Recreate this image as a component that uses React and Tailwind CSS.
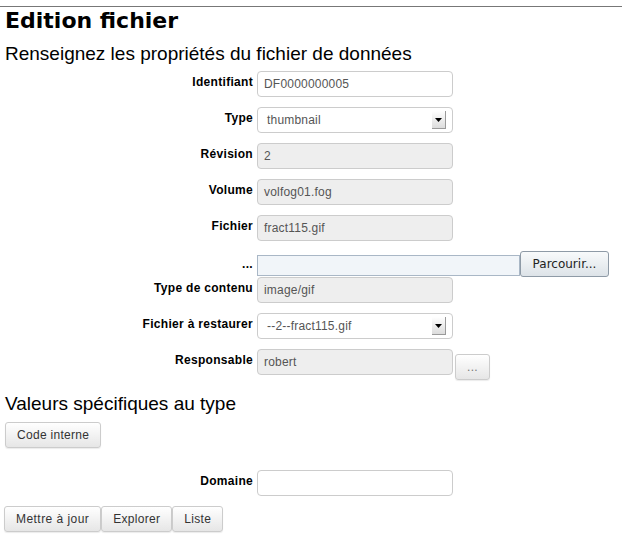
import React from "react";

const Label = ({ children, className = "" }) => (
    <div className={`text-right font-bold text-[12px] leading-[16px] text-black tracking-[0.3px] pr-[2px] ${className}`}>{children}</div>
);

const Field = ({ value, disabled }) => (
    <div
        className={`w-[196px] h-[26px] rounded-[4px] border border-[#cccccc] px-[6px] flex items-center text-[12px] tracking-[0.2px] text-[#555555] ${
            disabled ? "bg-[#eeeeee]" : "bg-white"
        }`}
    >
        {value}
    </div>
);

const Select = ({ value }) => (
    <div className="w-[196px] h-[26px] rounded-[4px] border border-[#cccccc] bg-white pl-[9px] pr-[6px] flex items-center justify-between text-[12px] tracking-[0.2px] text-[#555555]">
        <span>{value}</span>
        <span className="w-[14px] h-[18px] bg-gradient-to-b from-white to-[#dcdcdc] border-r border-b border-[#9a9a9a] flex items-center justify-center">
            <svg width="7" height="4" viewBox="0 0 7 4">
                <path d="M0 0h7L3.5 4z" fill="#000" />
            </svg>
        </span>
    </div>
);

const Btn = ({ children, className = "" }) => (
    <button
        className={`h-[26px] px-[11px] rounded-[3px] border border-[#cccccc] bg-gradient-to-b from-white to-[#e6e6e6] text-[12px] text-[#333333] tracking-[0.3px] shadow-[0_1px_1px_rgba(0,0,0,0.08)] ${className}`}
    >
        {children}
    </button>
);

export default function App() {
    return (
        <div className="w-[628px] h-[559px] bg-white overflow-hidden font-['Liberation_Sans',Arial,sans-serif]">
            <div className="pt-[6px] pr-[6px]">
                <div className="h-[1px] bg-[#777777]" />
            </div>
            <h1 className="px-[5px] font-['DejaVu_Sans',sans-serif] font-bold text-[22px] leading-[24px] text-black mt-[2px]">
                Edition fichier
            </h1>
            <h2 className="px-[5px] text-[19px] leading-[22px] text-black mt-[10px]">
                Renseignez les propriétés du fichier de données
            </h2>

            <div className="grid grid-cols-[255px_auto] gap-x-[2px] mt-[6px] items-start">
                <Label className="pt-[3px]">Identifiant</Label>
                <div className="mb-[10px]"><Field value="DF0000000005" /></div>

                <Label className="pt-[3px]">Type</Label>
                <div className="mb-[10px]"><Select value="thumbnail" /></div>

                <Label className="pt-[3px]">Révision</Label>
                <div className="mb-[10px]"><Field value="2" disabled /></div>

                <Label className="pt-[3px]">Volume</Label>
                <div className="mb-[10px]"><Field value="volfog01.fog" disabled /></div>

                <Label className="pt-[3px]">Fichier</Label>
                <div className="mb-[10px]"><Field value="fract115.gif" disabled /></div>

                <Label className="pt-[5px]">...</Label>
                <div className="flex items-center h-[26px]">
                    <div className="w-[263px] h-[21px] mt-[2px] border border-[#a9b7c6] bg-[#f1f5f9]" />
                    <button className="h-[26px] w-[89px] rounded-[3px] border border-[#8e9aa6] bg-gradient-to-b from-[#f8fafb] to-[#dde3e8] font-['DejaVu_Sans',sans-serif] text-[12px] text-[#222222]">
                        Parcourir...
                    </button>
                </div>

                <Label className="pt-[3px]">Type de contenu</Label>
                <div className="mb-[10px]"><Field value="image/gif" disabled /></div>

                <Label className="pt-[3px]">Fichier à restaurer</Label>
                <div className="mb-[10px]"><Select value="--2--fract115.gif" /></div>

                <Label className="pt-[3px]">Responsable</Label>
                <div className="flex items-start">
                    <Field value="robert" disabled />
                    <Btn className="ml-[2px] mt-[5px] w-[35px] px-0 text-[#777777]">...</Btn>
                </div>
            </div>

            <h2 className="px-[5px] text-[19px] leading-[22px] text-black mt-[13px]">Valeurs spécifiques au type</h2>
            <div className="px-[5px] mt-[7px]">
                <Btn>Code interne</Btn>
            </div>

            <div className="grid grid-cols-[255px_auto] gap-x-[2px] mt-[22px] items-start">
                <Label className="pt-[3px]">Domaine</Label>
                <Field value="" />
            </div>

            <div className="flex px-[4px] mt-[10px]">
                <Btn className="tracking-[0.45px]">Mettre à jour</Btn>
                <Btn>Explorer</Btn>
                <Btn>Liste</Btn>
            </div>
        </div>
    );
}
